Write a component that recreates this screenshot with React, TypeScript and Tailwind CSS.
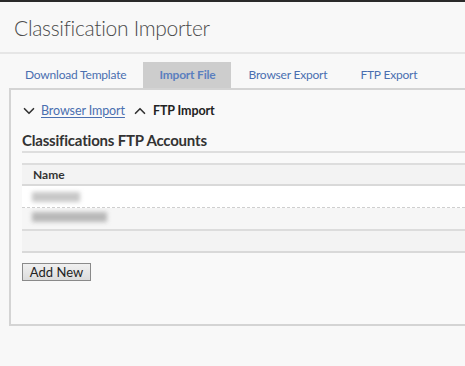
import React from "react";
import { ChevronDown, ChevronUp } from "lucide-react";

const tabs = [
  { id: "download", label: "Download Template" },
  { id: "import", label: "Import File" },
  { id: "browser", label: "Browser Export" },
  { id: "ftp", label: "FTP Export" },
];

export default function App() {
  const active = "import";

  return (
    <div className="w-[465px] h-[366px] overflow-hidden bg-[#f8f8f8] font-['Lato',sans-serif]">
      {/* top bar */}
      <div className="h-[2px] bg-[#2a2a2a]" />

      {/* header */}
      <div className="h-[52px] border-b-2 border-[#e6e6e6] pl-[14px] pt-[13px]">
        <h1 className="text-[21px] font-light leading-[26px] tracking-[-0.3px] text-[#4b4b4b] whitespace-nowrap">
          Classification Importer
        </h1>
      </div>

      {/* tabs */}
      <div className="flex gap-[2px] pl-[9px] pt-[8px]">
        {tabs.map((tab) => (
          <div
            key={tab.id}
            className={
              tab.id === active
                ? "h-[26px] shrink-0 whitespace-nowrap pl-[16px] pr-[15px] flex items-center bg-[#cdcdcd] text-[12px] tracking-[-0.2px] font-bold text-[#5b7fbf]"
                : "h-[26px] shrink-0 whitespace-nowrap pl-[16px] pr-[15px] flex items-center text-[12px] tracking-[-0.2px] text-[#4a6fb0]"
            }
          >
            {tab.label}
          </div>
        ))}
      </div>

      {/* panel */}
      <div className="ml-[9px] h-[238px] border-t-2 border-l-2 border-b-2 border-[#d4d4d4] bg-[#f9f9f9] pl-[11px]">
        <div className="flex items-center h-[40px] pt-[2px] text-[12.5px] tracking-[-0.1px] whitespace-nowrap">
          <ChevronDown size={18} strokeWidth={2.2} className="text-[#333] -ml-[2px]" />
          <span className="ml-[3px] text-[#4a6fb0] underline underline-offset-2">Browser Import</span>
          <ChevronUp size={18} strokeWidth={2.2} className="text-[#333] ml-[6px]" />
          <span className="ml-[4px] font-bold text-[#222]">FTP Import</span>
        </div>

        <div className="h-[21px] text-[15px] font-bold leading-[21px] tracking-[-0.2px] text-[#333] whitespace-nowrap">
          Classifications FTP Accounts
        </div>
        <div className="border-b-2 border-[#dedede]" />

        <div className="mt-[10px] border-t-2 border-[#dddddd]">
          <div className="h-[21px] bg-[#f3f3f3] border-b-2 border-[#d9d9d9] pl-[11px] flex items-center text-[12px] font-bold text-[#333]">
            Name
          </div>
          <div className="relative h-[22px] bg-white border-b border-dashed border-[#cfcfcf]">
            <div className="absolute left-[10px] top-[6px] h-[10px] w-[48px] bg-[#c8c8c8] blur-[2px]" />
          </div>
          <div className="relative h-[23px] bg-[#f6f6f6] border-b-2 border-[#dcdcdc]">
            <div className="absolute left-[10px] top-[4px] h-[10px] w-[75px] bg-[#b8b8b8] blur-[2px]" />
          </div>
          <div className="h-[22px] bg-[#f3f3f3] border-b-2 border-[#d9d9d9]" />
        </div>

        <button className="mt-[10px] h-[18px] w-[69px] border border-[#8a8a8a] bg-gradient-to-b from-[#f0f0f0] to-[#dcdcdc] text-[13px] leading-[16px] text-[#222]">
          Add New
        </button>
      </div>
    </div>
  );
}
